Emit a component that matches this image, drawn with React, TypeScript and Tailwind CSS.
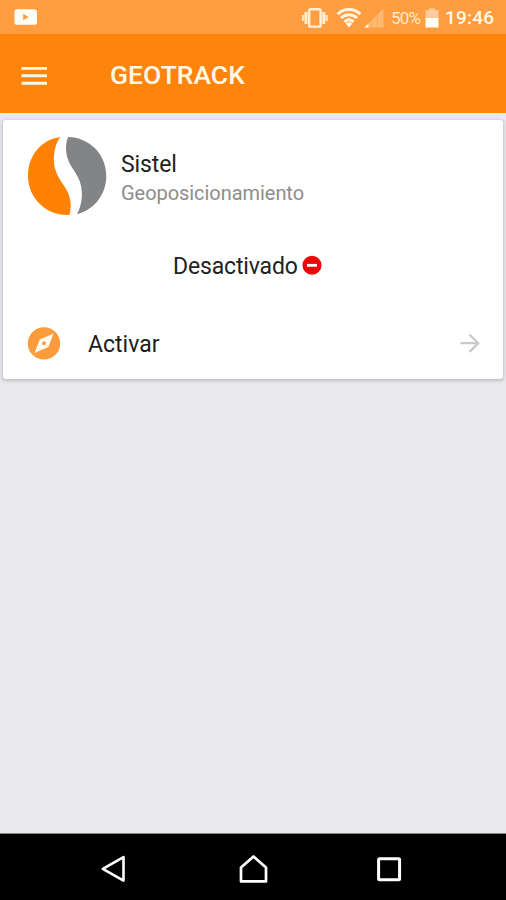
import React, { FC } from "react";

const StatusBar: FC = () => {
  return (
    <div className="flex h-[34px] shrink-0 items-center bg-[#ff9d40] pl-[14px] pr-[10px] pt-px text-[#fff8ea]">
      <svg viewBox="0 0 24 16" className="mb-px h-4 w-6" fill="none">
        <rect x="0.5" y="0.2" width="22.5" height="15.6" rx="2.6" fill="#fffdf5" />
        <path d="M9.2 4.7L14.6 8L9.2 11.3Z" fill="#ff9d40" />
      </svg>

      <div className="ml-auto flex items-center">
        <svg viewBox="0 0 28 22" className="h-[22px] w-7" fill="none">
          <rect x="8.2" y="2.2" width="11.4" height="17.4" rx="1.4" stroke="#fff0d4" strokeWidth="2.4" />
          <path d="M5 5V17M22.8 5V17" stroke="#fff0d4" strokeWidth="3" />
          <path d="M2.2 8V14M25.6 8V14" stroke="#ffe3bd" strokeWidth="2.6" />
        </svg>
        <svg viewBox="0 0 26 20" className="ml-[7px] h-5 w-[26px]" fill="none">
          <path
            d="M1.6 6.2C8 0 18 0 24.4 6.2M5 10C9.6 5.7 16.4 5.7 21 10M8.4 13.8C11.2 11.4 14.8 11.4 17.6 13.8"
            stroke="#fff4df"
            strokeWidth="2.9"
          />
          <path d="M9.6 15.6C11.4 13.9 14.6 13.9 16.4 15.6L13 19.4Z" fill="#fff4df" />
        </svg>
        <svg viewBox="0 0 20 20" className="ml-[2px] h-5 w-5">
          <path d="M19.5 0.5V19.5H0.5Z" fill="#ffb973" />
          <path d="M13.2 6.4V20M7.6 12V20" stroke="#ffa655" strokeWidth="0.9" />
          <path d="M4.4 15.4V19.5H0.5Z" fill="#fff4df" />
        </svg>
        <span className="ml-[7px] w-[30px] whitespace-nowrap text-[17px] leading-5 tracking-[-0.8px] text-[#ffeacb]">
          50%
        </span>
        <svg viewBox="0 0 14 20" className="ml-[4px] h-5 w-[14px]">
          <path d="M4 0.5H10V2H13.5V10H0.5V2H4Z" fill="#ffcb9a" />
          <path d="M0.5 10H13.5V19.5H0.5Z" fill="#fffdf8" />
        </svg>
        <span className="ml-[6px] w-[51px] whitespace-nowrap pt-px text-[19px] font-medium leading-5 tracking-[0.2px]">
          19:46
        </span>
      </div>
    </div>
  );
};

const AppHeader: FC = () => {
  return (
    <header className="flex h-[79px] shrink-0 items-center bg-[#ff840b] pb-px pl-[21px] pt-[5px]">
      <button aria-label="Menu" className="h-[18px] w-[27px]">
        <svg viewBox="0 0 27 18" className="h-[18px] w-[27px]" fill="none">
          <path
            d="M0.5 1.2H26M0.5 8.7H26M0.5 16.2H26"
            stroke="#fff8e8"
            strokeWidth="3"
          />
        </svg>
      </button>
      <h1 className="ml-[62px] pb-[2px] text-[26.5px] font-medium leading-8 text-[#fff8ea]">
        GEOTRACK
      </h1>
    </header>
  );
};

const SistelLogo: FC = () => {
  return (
    <svg viewBox="0 0 80 80" className="size-20 shrink-0">
      <path
        d="M33.3 1C14.5 3.6 1 19.5 1 40C1 62 19 79 40 79L42.5 78.8C45 70 44 60 37.5 50.5C30 39.5 26 32 27 20C27.5 12.5 29.5 6 33.3 1Z"
        fill="#ff8204"
      />
      <path
        d="M41.2 1C62 1.3 79.3 18 79.3 40C79.3 58.5 67 74 50 78.2C55 69 56.5 57 53 46C49 35 41.5 29.5 39.5 18C38.5 11 39 5.5 41.2 1Z"
        fill="#828486"
      />
    </svg>
  );
};

const StatusCard: FC = () => {
  return (
    <section className="mx-[3px] mt-[7px] flex h-[259px] flex-col rounded-[3px] bg-white shadow-[0_1px_3px_1px_#bebec4]">
      <div className="flex items-center pl-6 pt-4">
        <SistelLogo />
        <div className="ml-[14px] pt-[5px]">
          <h2 className="text-[23px] leading-[29px] tracking-[-0.1px] text-[#222]">Sistel</h2>
          <p className="text-[20px] leading-7 tracking-[-0.05px] text-[#8d8d8d]">
            Geoposicionamiento
          </p>
        </div>
      </div>

      <div className="mt-[35px] flex h-7 items-center pl-[170px]">
        <span className="w-[130px] pt-[3px] text-[23px] leading-7 tracking-[-0.15px] text-[#222]">
          Desactivado
        </span>
        <svg viewBox="0 0 20 20" className="-ml-px size-5">
          <circle cx="10" cy="10.3" r="9.5" fill="#ee0509" />
          <path d="M5 10.3H15" stroke="#fff" strokeWidth="2.8" />
        </svg>
      </div>

      <button className="mt-[47px] flex h-[34px] items-center pl-6 pr-[23px] text-left">
        <svg viewBox="0 0 34 34" className="size-[34px]">
          <circle cx="17" cy="17.4" r="16.2" fill="#fb9b3c" />
          <path d="M26.6 7.6L21.4 21L7.4 27L12.8 13.6Z" fill="#fffaf0" />
          <circle cx="17" cy="17.2" r="1.9" fill="#fb9b3c" />
        </svg>
        <span className="ml-[27px] pt-[3px] text-[23px] leading-7 text-[#1c1c1c]">Activar</span>
        <svg viewBox="0 0 20 20" className="ml-auto size-5" fill="none">
          <path d="M0.5 10.2H18M9.5 1.5L18.2 10.2L9.5 18.9" stroke="#c9c9c9" strokeWidth="2.3" />
        </svg>
      </button>
    </section>
  );
};

const NavigationBar: FC = () => {
  return (
    <nav className="flex h-[67px] shrink-0 items-center border-t border-[#88888a] bg-black pl-[99px] pr-[104px] pt-[3px]">
      <svg viewBox="0 0 28 30" className="h-[30px] w-7" fill="none">
        <path d="M24.5 3.2V26.6L3.8 14.9Z" stroke="#fff" strokeWidth="2.6" strokeLinejoin="round" />
      </svg>
      <svg viewBox="0 0 30 30" className="ml-[111px] h-[30px] w-[30px]" fill="none">
        <path
          d="M15.5 2.5L28 13.6V27.4H3V13.6Z"
          stroke="#fff"
          strokeWidth="2.7"
          strokeLinejoin="round"
        />
      </svg>
      <svg viewBox="0 0 26 26" className="ml-auto size-[26px]" fill="none">
        <rect x="2.6" y="2.8" width="21" height="21" rx="1" stroke="#fff" strokeWidth="3" />
      </svg>
    </nav>
  );
};

const App: FC = () => {
  return (
    <div className="flex h-[900px] w-[506px] flex-col overflow-hidden bg-[#e9e8ed] font-[Roboto,sans-serif]">
      <StatusBar />
      <AppHeader />
      <main className="min-h-0 flex-1">
        <StatusCard />
      </main>
      <NavigationBar />
    </div>
  );
};

export default App;
